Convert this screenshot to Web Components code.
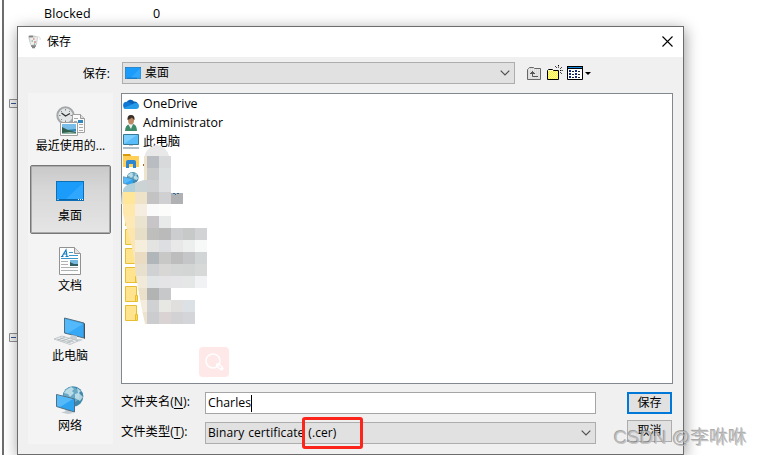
<!DOCTYPE html>
<html lang="zh-CN">
<head>
<meta charset="UTF-8">
<title>保存</title>
<style>
    body {
        margin: 0;
        width: 761px;
        height: 455px;
        overflow: hidden;
        background: #fff;
        color: #000;
        font: 12px/16px "Open Sans", "Noto Sans CJK SC", sans-serif;
    }
</style>
</head>
<body>
<app-backdrop>
    <span slot="name">Blocked</span>
    <span slot="value">0</span>
    <save-dialog>
        <span slot="title">保存</span>
        <combo-box slot="location" icon="desktop">桌面</combo-box>
        <place-item slot="places" icon="recent">最近使用的...</place-item>
        <place-item slot="places" icon="desktop" selected>桌面</place-item>
        <place-item slot="places" icon="document">文档</place-item>
        <place-item slot="places" icon="computer">此电脑</place-item>
        <place-item slot="places" icon="network">网络</place-item>
        <file-row slot="files" icon="cloud">OneDrive</file-row>
        <file-row slot="files" icon="user">Administrator</file-row>
        <file-row slot="files" icon="monitor">此电脑</file-row>
        <file-row slot="files" icon="library"></file-row>
        <file-row slot="files" icon="network"></file-row>
        <file-row slot="files" icon="folder"></file-row>
        <file-row slot="files" icon="folder"></file-row>
        <file-row slot="files" icon="folder"></file-row>
        <file-row slot="files" icon="folder"></file-row>
        <file-row slot="files" icon="folder"></file-row>
        <file-row slot="files" icon="folder"></file-row>
        <file-row slot="files" icon="folder"></file-row>
        <text-field slot="name">Charles</text-field>
        <combo-box slot="type">Binary certificate (.cer)</combo-box>
        <push-button slot="save" primary>保存</push-button>
        <push-button slot="cancel">取消</push-button>
    </save-dialog>
    <mosaic-mask></mosaic-mask>
    <search-badge></search-badge>
    <highlight-box></highlight-box>
    <water-mark>CSDN @李咻咻</water-mark>
</app-backdrop>

<script>
const icons = {
    desktop: ['0 0 28 20', `
        <rect x=".5" y=".5" width="27" height="19" fill="#1b9cfb" stroke="#0f6fb5"/>
        <path d="M27 2v16H10z" fill="#38acff" opacity=".7"/>
        <path d="M1 18.5h26" stroke="#0968ad"/><path d="M1.5 18.5h1M22 18.5h1M24 18.5h1M26 18.5h1" stroke="#fff"/>`],
    recent: ['0 0 30 30', `
        <circle cx="9.5" cy="9.5" r="8.2" fill="#e3e6e7" stroke="#a5a8aa" stroke-width="2"/>
        <path d="M9.5 3v1.5M9.5 14.5V16M3 9.5h1.5M14.5 9.5H16M5 5l1 1M14 5l-1 1M5 14l1-1" stroke="#888"/>
        <path d="M5.5 7l4 3 4.5-2.5" fill="none" stroke="#333" stroke-width="1.3"/>
        <path d="M16.5 8.5h8l4 4v14h-12z" fill="#fafafa" stroke="#a2a2a2"/>
        <path d="M24.5 8.5v4h4" fill="#ddd" stroke="#999"/>
        <path d="M18 12.5h4M18 15.5h3M18 18.5h3M23 18.5h4M23 21.5h4M23 24.5h4" stroke="#aaa"/>
        <path d="M22 14h5v3h-5z" fill="#2e86bd"/>
        <path d="M4.5 16.5h17v13h-17z" fill="#fff" stroke="#a0a0a0"/>
        <path d="M6 18h14v10H6z" fill="#79bde9"/><path d="M6 23l4 1 10-1v2H6z" fill="#2f83a8"/>
        <path d="M6 21l6 3 8 2v2H6z" fill="#32604f"/><path d="M6 27l8-1 6 1v1H6z" fill="#91b5a5"/>`],
    document: ['0 0 22 28', `
        <path d="M.5.5h15l6 6v21H.5z" fill="#fdfdfd" stroke="#929292"/>
        <path d="M15.5.5v6h6" fill="#e2e2e2" stroke="#929292"/>
        <path d="M3 9.5L7 3l1 6.5M5 7h3M2 9.5h2.5M6.5 9.5h3" fill="none" stroke="#1680c4" stroke-width="1.2"/>
        <path d="M10 5.5h4M10 8.5h9M2 11.5h17" stroke="#3997ce"/>
        <path d="M2 14.5h7M2 17.5h7M2 20.5h17M2 23.5h17" stroke="#b0b0b0"/>
        <path d="M11 13h8v6h-8z" fill="#77b8de"/><path d="M11 15l4 2 4 0v2h-8z" fill="#315d61"/>`],
    computer: ['0 0 32 28', `
        <path d="M10.5 1L30 6v15l-19.5-5z" fill="#35a9f5" stroke="#526f80"/>
        <path d="M11 2l18 5-15 9-3-1z" fill="#6dc7ff" opacity=".55"/>
        <path d="M30 6l1 1v15l-1-.5z" fill="#3d5361"/>
        <path d="M18 18l5 1v3h4l2 1-4 1.5-11-2.5z" fill="#c9d0d4"/>
        <path d="M0 22l8-3 16 5-8 3.5z" fill="#edf0f1" stroke="#afb6b9" stroke-width=".7"/>
        <path d="M3 22l14 4M6 20.8l14 4.2M4 23l7-3M8 24.3l7-3M13 25.5l6-2.5" stroke="#aab1b5" stroke-width=".7"/>`],
    network: ['0 0 28 29', `
        <circle cx="17" cy="10.5" r="10.3" fill="#3f88ab"/><circle cx="15.5" cy="9" r="8" fill="#69a9c6"/>
        <path d="M10 4l5-3 3 2-2 2 2 2-4 4-2-3-4-1zM21 2l4 3-2 2 4 4-3 4-5-3 0-4 3-1z" fill="#d6edf2" opacity=".75"/>
        <path d="M10 23l5 1v2l3 1-6 1-7-1.5 4-1z" fill="#c3cbd0"/>
        <path d="M.5 8.5L18.5 13v13L.5 20.5z" fill="#2ea3ef" stroke="#506f82"/>
        <path d="M1 9l16 4L4 21l-3-1z" fill="#72c8ff" opacity=".6"/>`],
    cloud: ['0 0 16 11', `
        <path d="M3.5 5A4.2 4.2 0 0 1 11 3.5 3.5 3.5 0 0 1 15 6L9 8z" fill="#0a61b8"/>
        <path d="M3.5 3.8C6 3.5 8 6 13 8L4 11A3.6 3.6 0 0 1 3.5 3.8z" fill="#0f78d4"/>
        <path d="M9 6.5a5 5 0 0 1 4-1.5 3 3 0 0 1 0 6H3q-1.5 0-2.5-1z" fill="#249be8"/>`],
    user: ['0 0 16 16', `
        <path d="M2 16q0-6 5-7h3q4 1 4 7z" fill="#3d8b69"/><path d="M5 9l3 5 2-5z" fill="#eee"/>
        <ellipse cx="8" cy="5" rx="3" ry="4.5" fill="#bd8964"/>
        <path d="M4.5 5Q4 0 8 0q4 0 3.5 5Q10 4 9 2.5 7 4 4.5 5z" fill="#3b3028"/>`],
    monitor: ['0 0 16 15', `
        <path d="M.5.5h15v10H.5z" fill="#58bdf8" stroke="#357999"/><path d="M1 10L14 1H1z" fill="#8bd5ff" opacity=".7"/>
        <path d="M6 11h4v1H6z" fill="#ccd"/><path d="M0 14h16" stroke="#8399a8" stroke-width="1.3"/>`],
    library: ['0 0 16 14', `
        <path d="M0 0h7l1.5 2H16v11H0z" fill="#ffcf57"/><path d="M0 0h7l1 2H0z" fill="#d99a0c"/>
        <path d="M3 14V8q0-2 2-2h6q2 0 2 2v6h-3v-4H6v4z" fill="#2c86d1"/>`],
    folder: ['0 0 16 16', `
        <path d="M2.5.5h11v15h-11z" fill="#ffe38d" stroke="#e9bd32"/><path d="M12.5 9.5h2v6h-2z" fill="#ffd75b" stroke="#e9bd32"/>`],
    jug: ['0 0 13 14', `
        <path d="M0 1l3-1 5 1 2 1-1 7-2 3-2 1-2-2-1-2z" fill="#c9cdca"/><path d="M2 3l7-1-1 7-5 1z" fill="#efefec"/>
        <path d="M9 2q4-1 3 3" fill="none" stroke="#ddd"/><path d="M1 1.5h4M3 11h5M4 12.5h3" stroke="#858585" stroke-width="1.3"/>
        <path d="M5 4h1.5M6 7h2" stroke="#c45a67"/><path d="M3.5 6h1.5M6 9h1" stroke="#52a17a"/>`],
    up: ['0 0 16 14', `
        <path d="M1.5 13.5v-10l1-1 1-1h4l1 1h6v11z" fill="#dcdcdc" stroke="#676767"/>
        <path d="M3 3.5h11M3 5h11M3 7h11M3 9h11M3 11h11" stroke="#eee" stroke-dasharray="1 1"/>
        <path d="M6.5 5v5.5H12M4 7.5h5M5 6.5h3" fill="none" stroke="#555"/>`],
    fresh: ['0 0 17 15', `
        <path d="M1.5 14.5v-9l1-1h4l1 1h5v9z" fill="#fffcc0" stroke="#000"/>
        <path d="M2 7.5h10M2 9.5h10M2 11.5h10M2 13.5h10" stroke="#fff21f" stroke-dasharray="1 1"/>
        <path d="M3 6.5h9M3 8.5h9M3 10.5h9M3 12.5h9" stroke="#fff21f" stroke-dasharray="1 1"/>
        <path d="M12.5 0v3M12.5 7v2M9 1l2 2M16 2l-2 2M9 5.5h2M14 5.5h3M14 7l2 2" stroke="#000" stroke-dasharray="1 .6"/>`],
    views: ['0 0 24 14', `
        <path d="M.5.5h15v13H.5z" fill="#fff" stroke="#000"/><path d="M0 1.5h16" stroke="#000" stroke-width="3"/><path d="M1 1.5h14" stroke="#1688dc"/>
        <path d="M2 5h2M8 5h2M2 8h2M8 8h2M2 11h2M8 11h2" stroke="#102b90" stroke-width="2"/>
        <path d="M5 5.5h2M11 5.5h2M5 8.5h2M11 8.5h2M5 11.5h2M11 11.5h2" stroke="#222"/>
        <path d="M18 6h6l-3 3z"/>`],
    close: ['0 0 11 11', '<path d="M.5.5l10 10M10.5.5l-10 10" stroke="#000" stroke-width="1.1"/>'],
    chevron: ['0 0 10 6', '<path d="M.7.7L5 5 9.3.7" fill="none" stroke="#505050" stroke-width="1.2"/>'],
    toggle: ['0 0 9 9', '<path d="M.5.5h8v8h-8z" fill="#f2f2f2" stroke="#919191"/><path d="M2 4.5h5" stroke="#34548f"/>']
};

function define(name, html) {
    customElements.define(name, class extends HTMLElement {
        constructor() {
            super();
            this.attachShadow({ mode: 'open' });
        }
        connectedCallback() {
            this.shadowRoot.innerHTML = typeof html === 'function' ? html(this) : html;
        }
    });
}

define('ui-icon', el => {
    const [box, shapes] = icons[el.getAttribute('name')];
    return `
        <style>
            :host { display: block; flex: none; width: ${el.getAttribute('w')}px; height: ${el.getAttribute('h')}px; }
            svg { display: block; width: 100%; height: 100%; }
        </style>
        <svg viewBox="${box}" preserveAspectRatio="none">${shapes}</svg>`;
});

define('app-backdrop', `
    <style>
        :host { display: block; position: relative; width: 761px; height: 455px; overflow: hidden; background: #fff; }
        .tree { box-sizing: border-box; height: 455px; margin-left: 2px; border-left: 2px solid #6d6d6d; padding: 6px 0 0 40px; }
        .row { display: grid; grid-template-columns: 109px 20px; font-size: 12.5px; letter-spacing: .1px; }
        .toggle { position: absolute; left: 9px; }
    </style>
    <div class="tree"><div class="row"><slot name="name"></slot><slot name="value"></slot></div></div>
    <ui-icon class="toggle" style="top:99px" name="toggle" w="9" h="9"></ui-icon>
    <ui-icon class="toggle" style="top:333px" name="toggle" w="9" h="9"></ui-icon>
    <slot></slot>`);

define('save-dialog', `
    <style>
        :host {
            position: absolute; left: 17px; top: 26px; box-sizing: border-box; width: 667px; height: 429px;
            display: flex; flex-direction: column; border: 1px solid #6c6c6c; background: #f0f0f0;
            box-shadow: 1px 3px 14px rgba(0,0,0,.4);
        }
        header { height: 30px; display: flex; align-items: center; padding: 0 10px 0 10px; background: #fff; }
        header slot { display: block; flex: 1; padding-left: 6px; }
        header ui-icon:last-child { margin-top: -2px; }
        .bar { height: 36px; display: flex; align-items: flex-start; padding-top: 5px; box-sizing: border-box; }
        .bar label { width: 92px; margin-right: 12px; text-align: right; padding-top: 4px; }
        .main { display: flex; padding-left: 10px; gap: 8px; }
        .places { width: 85px; height: 351px; background: #f4f4f4; }
        .list { box-sizing: border-box; width: 552px; height: 291px; background: #fff; border: 1px solid #828790; overflow: hidden; }
        .form { display: grid; grid-template-columns: 84px 391px 45px; grid-template-rows: 22px 22px; row-gap: 8px; padding-top: 8px; }
        .form label { padding-top: 2px; font-size: 12.3px; white-space: nowrap; }
        .form .end { margin-left: 31px; width: 45px; }
        .cancel { margin-top: -2px; }
        u { text-underline-offset: 2px; }
    </style>
    <header><ui-icon name="jug" w="13" h="14"></ui-icon><slot name="title"></slot><ui-icon name="close" w="11" h="11"></ui-icon></header>
    <div class="bar">
        <label>保存:</label><slot name="location"></slot>
        <ui-icon name="up" w="16" h="14" style="margin:4px 0 0 11px"></ui-icon>
        <ui-icon name="fresh" w="17" h="15" style="margin:3px 0 0 4px"></ui-icon>
        <ui-icon name="views" w="24" h="14" style="margin:4px 0 0 4px"></ui-icon>
    </div>
    <div class="main">
        <div class="places"><slot name="places"></slot></div>
        <div>
            <div class="list"><slot name="files"></slot></div>
            <div class="form">
                <label>文件夹名(<u>N</u>):</label><slot name="name"></slot><div class="end"><slot name="save"></slot></div>
                <label>文件类型(<u>T</u>):</label><slot name="type"></slot><div class="end cancel"><slot name="cancel"></slot></div>
            </div>
        </div>
    </div>`);

define('combo-box', el => `
    <style>
        :host { display: flex; align-items: center; box-sizing: border-box; width: 391px; height: 22px; padding: 0 4px 0 2px; border: 1px solid #adadad; background: #e1e1e1; letter-spacing: .1px; word-spacing: .6px; }
        :host([slot=location]) { width: 393px; }
        .value { flex: 1; display: flex; align-items: center; gap: 4px; white-space: nowrap; }
    </style>
    <div class="value">${el.hasAttribute('icon') ? `<ui-icon name="${el.getAttribute('icon')}" w="16" h="12"></ui-icon>` : ''}<span><slot></slot></span></div>
    <ui-icon name="chevron" w="10" h="6"></ui-icon>`);

define('text-field', `
    <style>
        :host { display: flex; align-items: center; box-sizing: border-box; height: 22px; padding-left: 2px; background: #fff; border: 1px solid #a5a5a5; font-size: 12.3px; }
        i { width: 1px; height: 17px; background: #000; }
    </style>
    <slot></slot><i></i>`);

define('push-button', `
    <style>
        :host { display: flex; align-items: center; justify-content: center; box-sizing: border-box; width: 45px; height: 22px; background: #e1e1e1; border: 1px solid #adadad; }
        :host([primary]) { border: 2px solid #0078d7; }
    </style>
    <slot></slot>`);

const placeSizes = { recent: [30, 30], desktop: [28, 20], document: [22, 28], computer: [32, 28], network: [28, 29] };
define('place-item', el => {
    const [w, h] = placeSizes[el.getAttribute('icon')];
    return `
        <style>
            :host { display: flex; flex-direction: column; align-items: center; box-sizing: border-box; height: 70px; padding: 0 1px 6px 0; justify-content: flex-end; gap: 3px; }
            :host([icon=recent]) { height: 69px; padding: 0 0 8px; gap: 2px; }
            :host([icon=document]) { height: 66px; }
            :host([selected]) { width: 81px; height: 69px; margin: 3px 0 0 2px; padding: 0 1px 9px 0; gap: 7px; border: 1px solid #777; border-radius: 2px; background: linear-gradient(#c9c9c9, #d7d7d7 35%, #e5e5e5); box-shadow: inset 0 0 0 1px #aaa; }
        </style>
        <ui-icon name="${el.getAttribute('icon')}" w="${w}" h="${h}"></ui-icon>
        <span><slot></slot></span>`;
});

define('file-row', el => `
    <style>
        :host { display: flex; align-items: center; gap: 4px; height: 19px; padding-left: 1px; font-size: 12.4px; }
    </style>
    <ui-icon name="${el.getAttribute('icon')}" w="16" h="${{ cloud: 11, monitor: 15, library: 14 }[el.getAttribute('icon')] || 16}"></ui-icon><slot></slot>`);

// each entry: top, first column, cell colours
const cells = [
    [156, 147, ['#b9bcc0', '#d8d9db']],
    [168, 147, ['#c7c9cb', '#dcdfe0']],
    [180, 123, ['#b0d1d9', '#cbd3d4', '#cfd0d1', '#dddfe0']],
    [192, 123, ['#ffe698', '#eee2c8', '#c3c3c3', '#d0cfd1', '#b0b1b3']],
    [204, 123, ['#ffe8ab', '#f5eee0', '#fafafa', '#fcfcfb']],
    [216, 123, ['#fde9b5', '#e9e3d0', '#c8c5c8', '#e8eaea']],
    [228, 123, ['#fde6ad', '#e7dec8', '#bebfbd', '#b9bab9', '#cccdce', '#c7c9c8', '#d2d3d5']],
    [240, 123, ['#fbe7b6', '#f5eedc', '#e3e4e2', '#dcdee1', '#e8e8e8', '#ecefee', '#f7f9f8']],
    [252, 123, ['#fbe7b6', '#e9dcc3', '#b1b6ba', '#c8c8c6', '#bebdbe', '#c5c6c8', '#d1d5d5']],
    [264, 135, ['#e8e0cf', '#d0d1d2', '#d8d7d5', '#d4d6d5', '#d3d4d4', '#d7d9d8']],
    [276, 135, ['#f1e9d9', '#e1e4e5', '#e4e4e6', '#e5e5e7', '#e5e6e6', '#f1f2f4']],
    [288, 135, ['#ebe1cb', '#b2b4b3', '#c7c8ca']],
    [300, 135, ['#f4ecdc', '#d0d1d3', '#e7e8e4', '#e1dfde', '#dce1e5']],
    [312, 135, ['#eee3ce', '#cbccce', '#d9d4d3', '#d2d2d4', '#d4d5d9']]
];
define('mosaic-mask', () => {
    const rects = cells.map(([y, x, colours]) => colours.map((c, i) =>
        `<rect x="${x + i * 12}" y="${y}" width="12" height="12" fill="${c}"/>`).join('')).join('');
    return `
        <style>
            :host { position: absolute; left: 121px; top: 144px; width: 88px; height: 182px; }
            svg { display: block; }
        </style>
        <svg width="88" height="182" viewBox="121 144 88 182">
            <clipPath id="brush"><path d="M121 204L122 192Q124 184 134 183L144 180V156H210V324H145L141 305 136 276 134 258 131 243 125 222Z"/></clipPath>
            <path d="M144.500 156q3-10 12-11 10 1 12.500 11z" fill="#e8e8e9"/>
            <path d="M144 156h3v24h-3z" fill="#eee3cd"/>
            <path d="M143 164h1v2h-1z" fill="#a5652a"/>
            <g clip-path="url(#brush)" shape-rendering="crispEdges">
                <path d="M121 192h2v12h-2z" fill="#dce1e2"/>
                ${rects}
            </g>
            <path d="M171 192.500h12" stroke="#fff"/><path d="M173 193.500h2M175 194.500h1M177 193.500h2" stroke="#2d699b"/>
        </svg>`;
});

define('search-badge', `
    <style>:host { position: absolute; left: 199px; top: 347px; width: 30px; height: 30px; border-radius: 4px; background: #ffe8e8; }</style>
    <svg width="30" height="30" fill="none" stroke="#fff"><circle cx="14" cy="14" r="7" stroke-width="1.5"/><path d="M19 18l3.5 3.5" stroke-width="4" stroke-linecap="round"/><path d="M19.5 18.5l2.5 2.5" stroke="#ffe8e8" stroke-width="1.5"/></svg>`);

define('highlight-box', `
    <style>:host { position: absolute; left: 302px; top: 417px; box-sizing: border-box; width: 61px; height: 32px; border: 3px solid #fb251b; border-radius: 3px; }</style>`);

define('water-mark', `
    <style>:host { position: absolute; left: 614px; top: 425px; font: 18.7px/26px "Liberation Sans", "Noto Sans CJK SC", sans-serif; color: rgba(190,190,190,.85); text-shadow: -1px -1px 0 rgba(100,100,100,.55); white-space: nowrap; }</style>
    <slot></slot>`);
</script>
</body>
</html>
